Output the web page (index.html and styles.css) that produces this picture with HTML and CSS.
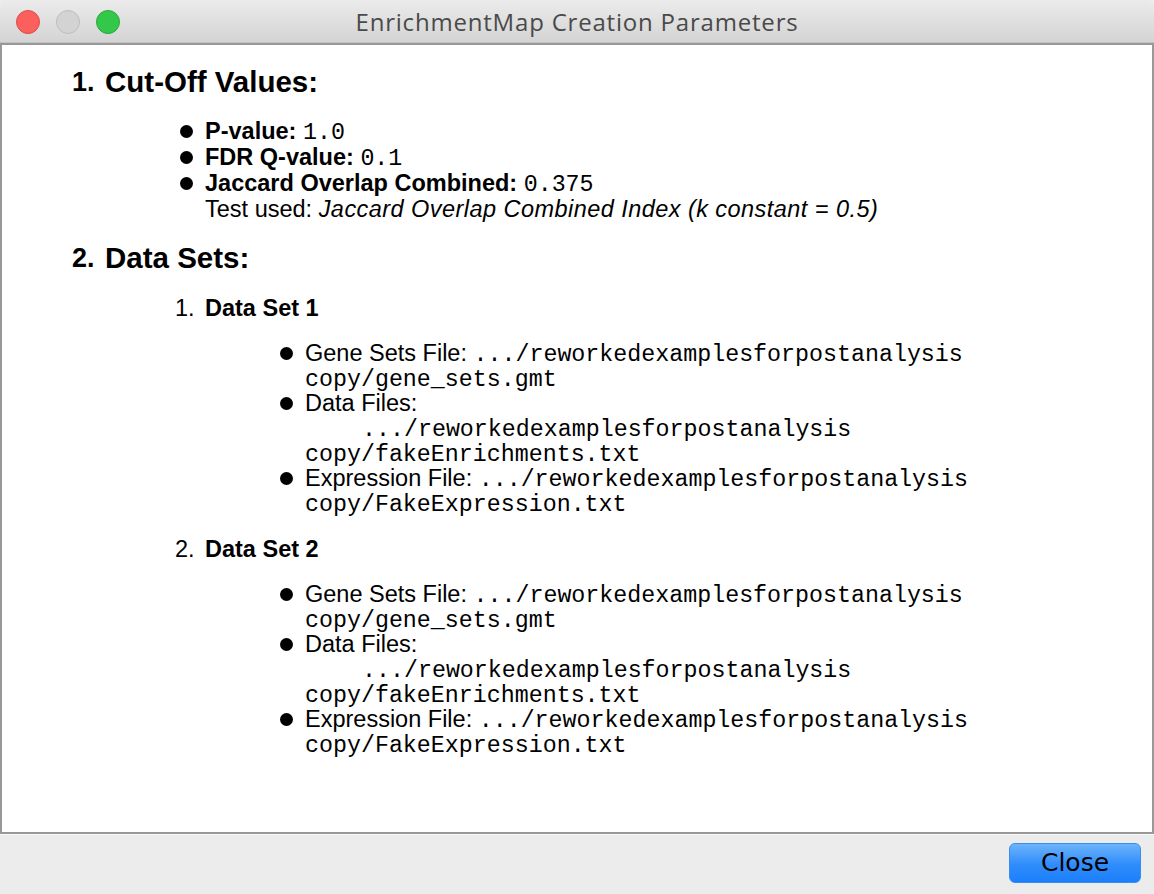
FILE: index.html
```html
<!DOCTYPE html>
<html>
<head>
<meta charset="utf-8">
<link rel="stylesheet" href="styles.css">
</head>
<body>
<div class="window">
  <div class="titlebar">
    <div class="lights">
      <span class="light red"></span>
      <span class="light grey"></span>
      <span class="light green"></span>
    </div>
    <div class="title">EnrichmentMap Creation Parameters</div>
  </div>
  <div class="content">
    <section class="sec">
      <div class="sec-head"><span class="num">1.</span><span>Cut-Off Values:</span></div>
      <ul class="bullets cut">
        <li><b>P-value:</b> <code>1.0</code></li>
        <li><b>FDR Q-value:</b> <code>0.1</code></li>
        <li><b>Jaccard Overlap Combined:</b> <code>0.375</code><br>Test used: <i>Jaccard Overlap Combined Index (k constant = 0.5)</i></li>
      </ul>
    </section>
    <section class="sec">
      <div class="sec-head"><span class="num">2.</span><span>Data Sets:</span></div>
      <div class="dataset">
        <div class="ds-head"><span class="ds-num">1.</span><b>Data Set 1</b></div>
        <ul class="bullets files">
          <li>Gene Sets File: <code>.../reworkedexamplesforpostanalysis</code><br><code>copy/gene_sets.gmt</code></li>
          <li>Data Files:<br><code class="ind">.../reworkedexamplesforpostanalysis</code><br><code>copy/fakeEnrichments.txt</code></li>
          <li>Expression File: <code>.../reworkedexamplesforpostanalysis</code><br><code>copy/FakeExpression.txt</code></li>
        </ul>
      </div>
      <div class="dataset">
        <div class="ds-head"><span class="ds-num">2.</span><b>Data Set 2</b></div>
        <ul class="bullets files">
          <li>Gene Sets File: <code>.../reworkedexamplesforpostanalysis</code><br><code>copy/gene_sets.gmt</code></li>
          <li>Data Files:<br><code class="ind">.../reworkedexamplesforpostanalysis</code><br><code>copy/fakeEnrichments.txt</code></li>
          <li>Expression File: <code>.../reworkedexamplesforpostanalysis</code><br><code>copy/FakeExpression.txt</code></li>
        </ul>
      </div>
    </section>
  </div>
  <div class="footer">
    <button class="close-btn">Close</button>
  </div>
</div>
</body>
</html>
```
FILE: styles.css
```css
html, body {
  margin: 0;
  padding: 0;
  background: #ececec;
}
.window {
  width: 1154px;
  height: 894px;
  display: flex;
  flex-direction: column;
  background: #ececec;
  font-family: "Liberation Sans", Arial, sans-serif;
  color: #000;
}
.titlebar {
  height: 42px;
  flex: none;
  border-bottom: 1px solid #c2c2c2;
  border-radius: 9px 9px 0 0;
  background: linear-gradient(#ebebeb, #d4d4d4);
  display: flex;
  align-items: center;
  position: relative;
}
.lights {
  display: flex;
  gap: 16px;
  padding-left: 16px;
  padding-top: 2px;
}
.light {
  width: 22px;
  height: 22px;
  border-radius: 50%;
  display: block;
}
.red { background: #fc605c; border: 1px solid #de4b46; }
.grey { background: #d3d3d3; border: 1px solid #bdbdbd; }
.green { background: #34c84a; border: 1px solid #28a83b; }
.title {
  position: absolute;
  left: 0;
  right: 0;
  top: 0;
  height: 42px;
  line-height: 44px;
  text-align: center;
  font-family: "Open Sans", "Liberation Sans", sans-serif;
  font-size: 24px;
  letter-spacing: 0.8px;
  color: #4a4a4a;
  pointer-events: none;
}
.content {
  flex: none;
  height: 787px;
  background: #fff;
  border: 2px solid #989898;
}
.sec-head {
  display: flex;
  padding-left: 70px;
  font-weight: bold;
  font-size: 29.5px;
  line-height: 34px;
}
.sec:first-child .sec-head { margin-top: 20px; }
.num {
  width: 33px;
  flex: none;
  font-size: 27px;
}
.bullets {
  list-style: none;
  margin: 0;
  padding: 0;
  font-size: 23.5px;
}
.bullets li {
  position: relative;
}
.bullets li::before {
  content: "";
  position: absolute;
  width: 13px;
  height: 13px;
  border-radius: 50%;
  background: #000;
  left: -25px;
  top: 6px;
}
.cut {
  margin: 19px 0 19px 203px;
  line-height: 26px;
}
.cut li::before { top: 7px; }
code {
  font-family: "Liberation Mono", "Courier New", monospace;
  font-size: 23.3px;
  line-height: 0;
}
i { letter-spacing: 0.45px; }
code.ind { padding-left: 57px; }
.dataset {
  padding-left: 173px;
}
.ds-head {
  display: flex;
  font-size: 23.5px;
  line-height: 26px;
  margin-top: 20px;
}
.ds-num {
  width: 30px;
  flex: none;
}
.files {
  margin: 20px 0 0 130px;
  line-height: 25px;
}
.footer {
  flex: 1;
  border-top: 1px solid #fafafa;
  display: flex;
  justify-content: flex-end;
  align-items: flex-start;
  padding: 8px 13px 0 0;
}
.close-btn {
  width: 132px;
  height: 40px;
  border: 1px solid #3b8cf2;
  border-radius: 6px;
  background: linear-gradient(#6cb4fb, #2f8cfb 55%, #1b7ffb);
  font-family: "DejaVu Sans", "Liberation Sans", sans-serif;
  font-size: 25px;
  color: #000;
  padding: 0;
  line-height: 38px;
}
```
